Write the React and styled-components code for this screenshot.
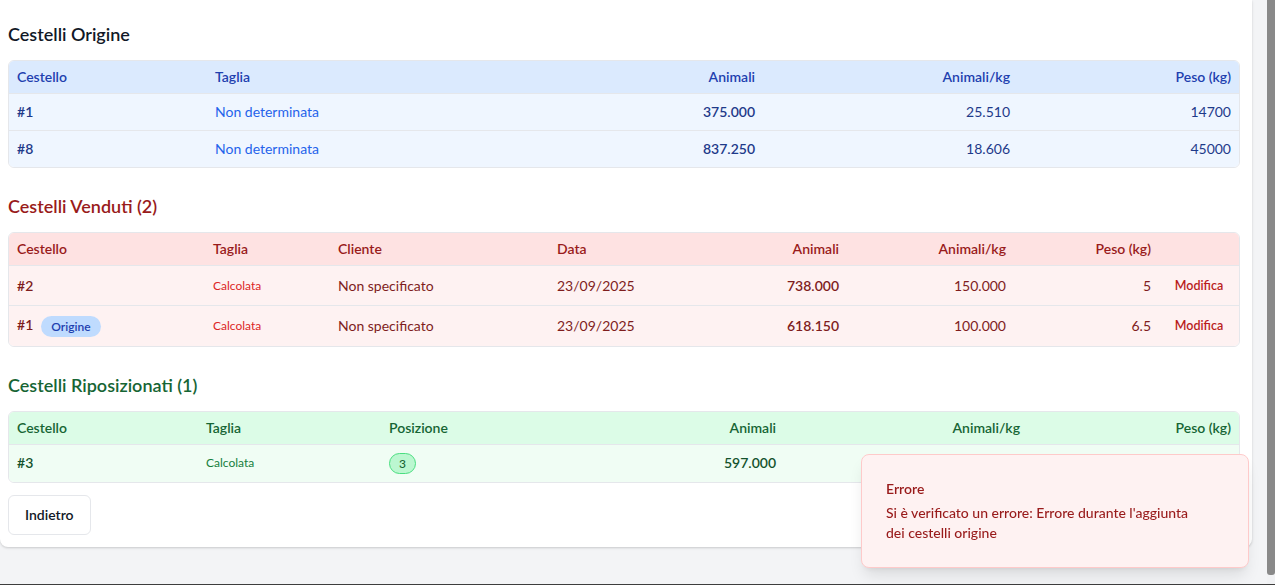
import styled, { createGlobalStyle } from 'styled-components';

const GlobalStyle = createGlobalStyle`
  html, body {
    margin: 0;
    padding: 0;
    height: 100%;
    overflow: hidden;
  }
  body {
    font-family: Lato, "Noto Sans", "Liberation Sans", sans-serif;
    background-color: #f3f4f6;
    color: #111827;
  }
  * {
    box-sizing: border-box;
  }
`;

// colori per ogni tipo di tabella
const tones = {
  blue: {
    head: '#dbeafe',
    row: '#eff6ff',
    headText: '#1e40af',
    text: '#1e3a8a',
    accent: '#2563eb',
    title: '#111827',
  },
  red: {
    head: '#fee2e2',
    row: '#fef2f2',
    headText: '#991b1b',
    text: '#7f1d1d',
    accent: '#dc2626',
    title: '#991b1b',
  },
  green: {
    head: '#dcfce7',
    row: '#f0fdf4',
    headText: '#166534',
    text: '#14532d',
    accent: '#15803d',
    title: '#166534',
  },
};

const Frame = styled.div`
  height: 100vh;
  display: flex;
  border-bottom: 1px solid #3d3d3d;
`;

const Main = styled.div`
  flex: 1;
  min-width: 0;
  overflow: hidden;
  padding-right: 15px;
`;

// barra di scorrimento finta (lo screenshot è senza scrollbar)
const Rail = styled.div`
  width: 8px;
  display: flex;
  flex-direction: column;
  background: #f1f2f4;
`;

const Thumb = styled.div`
  height: 575px;
  background: #898989;
  border-radius: 0 0 3px 3px;
`;

const Card = styled.div`
  background: #ffffff;
  padding: 20px 12px 12px 8px;
  border-radius: 0 0 8px 8px;
  box-shadow: 0 1px 3px rgba(0, 0, 0, 0.12), 0 1px 2px rgba(0, 0, 0, 0.06);
`;

const Section = styled.section`
  margin-bottom: ${(p) => (p.$last ? '12px' : '24px')};
`;

const Title = styled.h3`
  margin: 0 0 12px;
  font-size: 18px;
  line-height: 28px;
  font-weight: 600;
  color: ${(p) => tones[p.$tone].title};
`;

const TableWrap = styled.div`
  border: 1px solid #e5e7eb;
  border-radius: 6px;
  overflow: hidden;
`;

const Table = styled.table`
  width: 100%;
  border-collapse: collapse;
  table-layout: fixed;
  font-size: 14px;
  line-height: 20px;
`;

const HeadRow = styled.tr`
  background: ${(p) => tones[p.$tone].head};
`;

const Th = styled.th`
  padding: 6px 8px;
  text-align: ${(p) => p.$align || 'left'};
  font-weight: 600;
  color: ${(p) => tones[p.$tone].headText};
  white-space: nowrap;
`;

const Row = styled.tr`
  background: ${(p) => tones[p.$tone].row};
  border-top: 1px solid #e5e7eb;
`;

const Td = styled.td`
  padding: 8px;
  height: ${(p) => p.$h || 'auto'};
  text-align: ${(p) => p.$align || 'left'};
  color: ${(p) => (p.$accent ? tones[p.$tone].accent : tones[p.$tone].text)};
  font-weight: ${(p) => (p.$strong ? 600 : 400)};
  font-size: ${(p) => (p.$small ? '12px' : '14px')};
  white-space: nowrap;
  vertical-align: middle;
`;

const Pill = styled.span`
  display: inline-block;
  margin-left: 8px;
  padding: 2px 10px;
  border-radius: 999px;
  background: #bfdbfe;
  color: #1e40af;
  font-size: 12px;
  line-height: 17px;
  font-weight: 600;
  vertical-align: middle;
`;

const PosBadge = styled.span`
  display: inline-block;
  padding: 2px 9px;
  border-radius: 999px;
  background: #bbf7d0;
  border: 1px solid #4ade80;
  color: #166534;
  font-size: 12px;
  line-height: 15px;
  font-weight: 500;
`;

const EditButton = styled.button`
  display: block;
  margin: 0 auto;
  padding: 3px 6px;
  border: none;
  background: transparent;
  color: #b91c1c;
  font-family: inherit;
  font-size: 12.5px;
  line-height: 17px;
  font-weight: 600;
  cursor: pointer;
`;

const BackButton = styled.button`
  height: 40px;
  padding: 0 16px;
  background: #ffffff;
  border: 1px solid #e5e7eb;
  border-radius: 6px;
  font-family: inherit;
  font-size: 14px;
  font-weight: 600;
  color: #111827;
  cursor: pointer;
`;

const Toast = styled.div`
  position: fixed;
  right: 26px;
  bottom: 17px;
  width: 388px;
  padding: 24px;
  background: #fef2f2;
  border: 1px solid #fecaca;
  border-radius: 8px;
  box-shadow: 0 10px 15px -3px rgba(0, 0, 0, 0.1), 0 4px 6px -4px rgba(0, 0, 0, 0.1);
  color: #991b1b;
  font-size: 14px;
  line-height: 20px;
`;

const ToastTitle = styled.div`
  font-weight: 600;
  margin-bottom: 4px;
`;

const ToastText = styled.div`
  max-width: 318px;
  font-weight: 500;
`;

const origine = [
  { id: 1, animali: '375.000', perKg: '25.510', peso: '14700' },
  { id: 8, animali: '837.250', perKg: '18.606', peso: '45000' },
];

const venduti = [
  { id: 2, origine: false, animali: '738.000', perKg: '150.000', peso: '5' },
  { id: 1, origine: true, animali: '618.150', perKg: '100.000', peso: '6.5' },
];

const riposizionati = [
  { id: 3, pos: 3, animali: '597.000', perKg: '116.000', peso: '5.15' },
];

function Cols({ widths }) {
  return (
    <colgroup>
      {widths.map((w, i) => (
        <col key={i} style={{ width: w }} />
      ))}
    </colgroup>
  );
}

function App() {
  return (
    <Frame>
      <GlobalStyle />
      <Main>
        <Card>
          <Section>
            <Title $tone='blue'>Cestelli Origine</Title>
            <TableWrap>
              <Table>
                <Cols widths={[198, 300, 256, 255, 221]} />
                <thead>
                  <HeadRow $tone='blue'>
                    <Th $tone='blue'>Cestello</Th>
                    <Th $tone='blue'>Taglia</Th>
                    <Th $tone='blue' $align='right'>Animali</Th>
                    <Th $tone='blue' $align='right'>Animali/kg</Th>
                    <Th $tone='blue' $align='right'>Peso (kg)</Th>
                  </HeadRow>
                </thead>
                <tbody>
                  {origine.map((r) => (
                    <Row key={r.id} $tone='blue'>
                      <Td $tone='blue' $strong>#{r.id}</Td>
                      <Td $tone='blue' $accent>Non determinata</Td>
                      <Td $tone='blue' $strong $align='right'>{r.animali}</Td>
                      <Td $tone='blue' $align='right'>{r.perKg}</Td>
                      <Td $tone='blue' $align='right'>{r.peso}</Td>
                    </Row>
                  ))}
                </tbody>
              </Table>
            </TableWrap>
          </Section>

          <Section>
            <Title $tone='red'>Cestelli Venduti (2)</Title>
            <TableWrap>
              <Table>
                <Cols widths={[196, 125, 219, 150, 148, 167, 145, 80]} />
                <thead>
                  <HeadRow $tone='red'>
                    <Th $tone='red'>Cestello</Th>
                    <Th $tone='red'>Taglia</Th>
                    <Th $tone='red'>Cliente</Th>
                    <Th $tone='red'>Data</Th>
                    <Th $tone='red' $align='right'>Animali</Th>
                    <Th $tone='red' $align='right'>Animali/kg</Th>
                    <Th $tone='red' $align='right'>Peso (kg)</Th>
                    <Th $tone='red'></Th>
                  </HeadRow>
                </thead>
                <tbody>
                  {venduti.map((r, i) => (
                    <Row key={i} $tone='red'>
                      <Td $tone='red' $strong $h='40px'>
                        #{r.id}
                        {r.origine && <Pill>Origine</Pill>}
                      </Td>
                      <Td $tone='red' $accent $small>Calcolata</Td>
                      <Td $tone='red'>Non specificato</Td>
                      <Td $tone='red'>23/09/2025</Td>
                      <Td $tone='red' $strong $align='right'>{r.animali}</Td>
                      <Td $tone='red' $align='right'>{r.perKg}</Td>
                      <Td $tone='red' $align='right'>{r.peso}</Td>
                      <Td $tone='red'>
                        <EditButton>Modifica</EditButton>
                      </Td>
                    </Row>
                  ))}
                </tbody>
              </Table>
            </TableWrap>
          </Section>

          <Section $last>
            <Title $tone='green'>Cestelli Riposizionati (1)</Title>
            <TableWrap>
              <Table>
                <Cols widths={[189, 183, 200, 203, 244, 211]} />
                <thead>
                  <HeadRow $tone='green'>
                    <Th $tone='green'>Cestello</Th>
                    <Th $tone='green'>Taglia</Th>
                    <Th $tone='green'>Posizione</Th>
                    <Th $tone='green' $align='right'>Animali</Th>
                    <Th $tone='green' $align='right'>Animali/kg</Th>
                    <Th $tone='green' $align='right'>Peso (kg)</Th>
                  </HeadRow>
                </thead>
                <tbody>
                  {riposizionati.map((r) => (
                    <Row key={r.id} $tone='green'>
                      <Td $tone='green' $strong>#{r.id}</Td>
                      <Td $tone='green' $accent $small>Calcolata</Td>
                      <Td $tone='green'>
                        <PosBadge>{r.pos}</PosBadge>
                      </Td>
                      <Td $tone='green' $strong $align='right'>{r.animali}</Td>
                      <Td $tone='green' $align='right'>{r.perKg}</Td>
                      <Td $tone='green' $align='right'>{r.peso}</Td>
                    </Row>
                  ))}
                </tbody>
              </Table>
            </TableWrap>
          </Section>

          <BackButton>Indietro</BackButton>
        </Card>
      </Main>
      <Rail>
        <Thumb />
      </Rail>

      <Toast>
        <ToastTitle>Errore</ToastTitle>
        <ToastText>
          Si è verificato un errore: Errore durante l'aggiunta dei cestelli origine
        </ToastText>
      </Toast>
    </Frame>
  );
}

export default App;
